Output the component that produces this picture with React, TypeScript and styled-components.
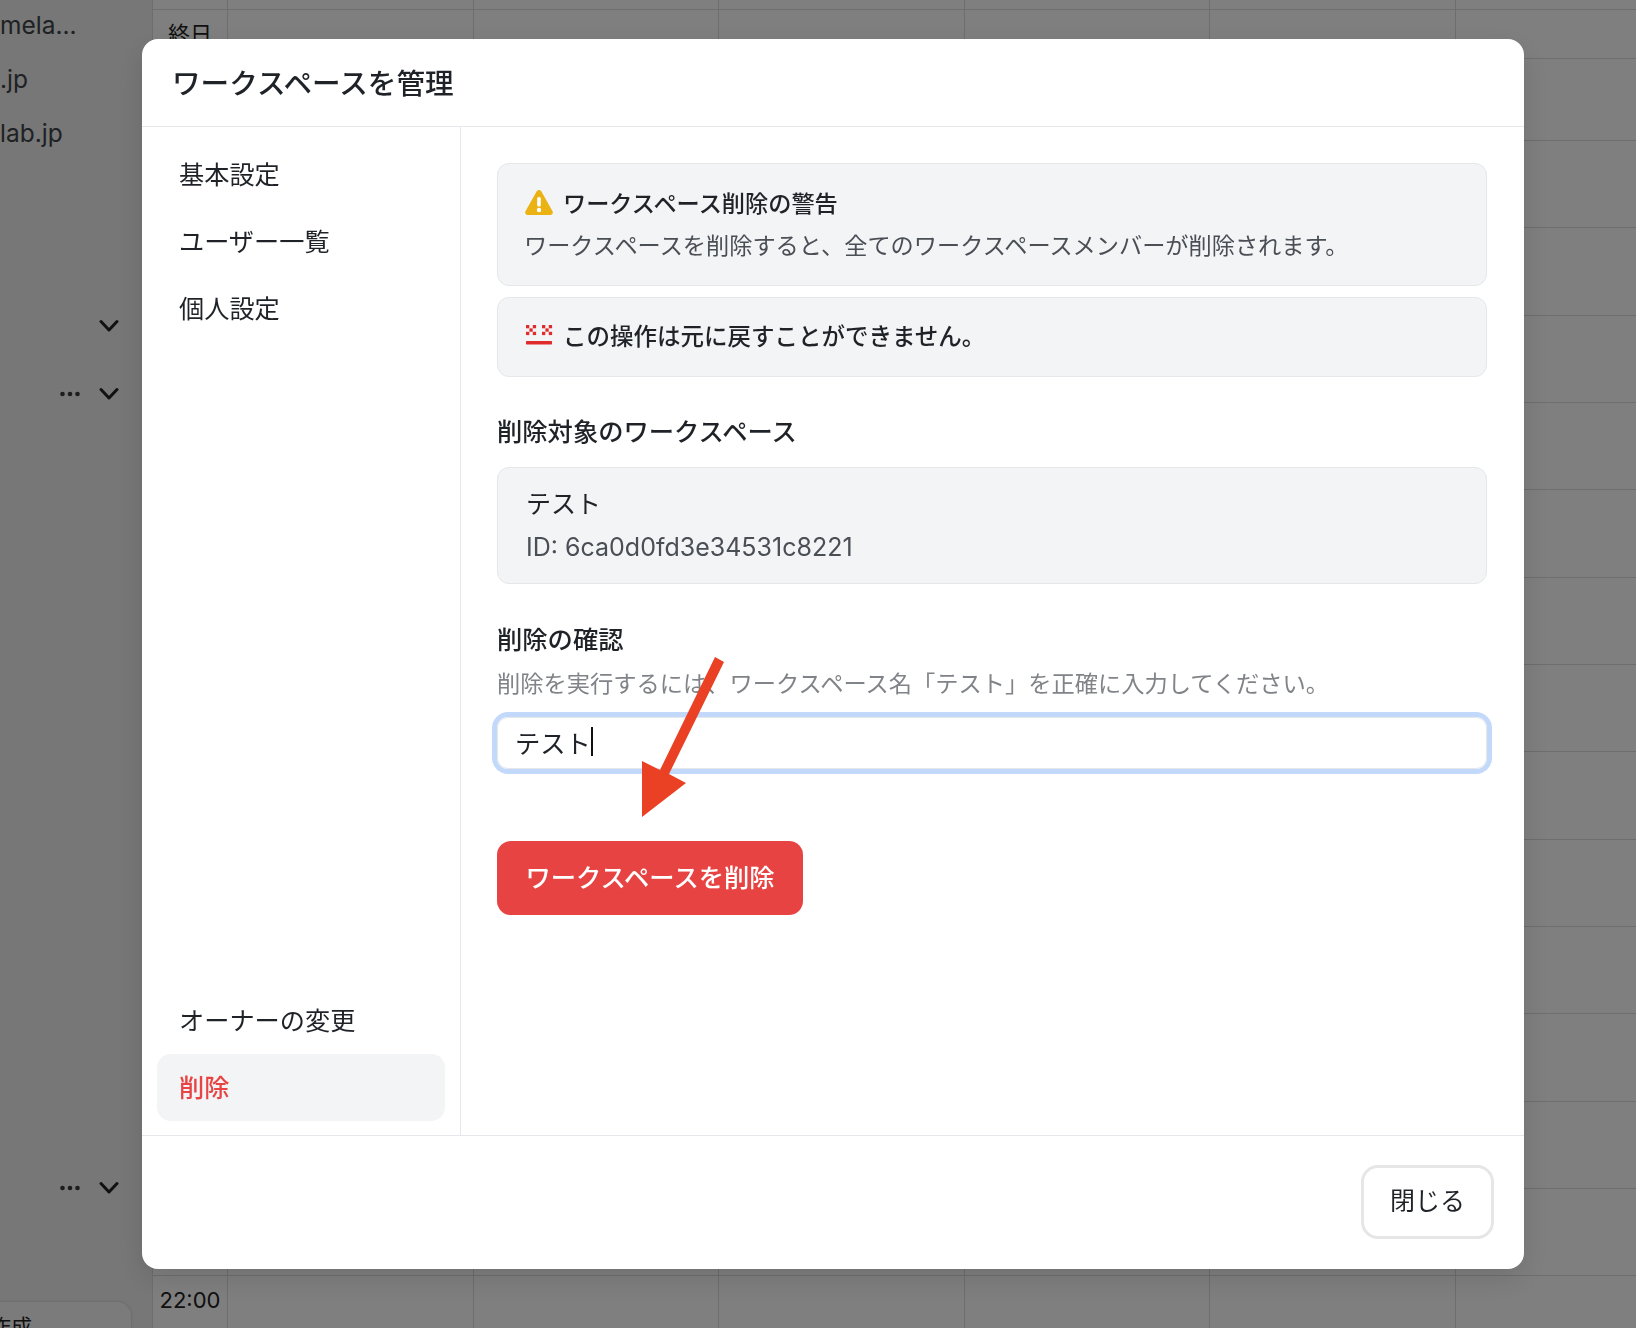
import styled, { createGlobalStyle } from "styled-components"

const GlobalStyle = createGlobalStyle`
  html, body {
    margin: 0;
    padding: 0;
    height: 100%;
    overflow: hidden;
    background: #fff;
  }
  body {
    font-family: Inter, "Noto Sans CJK JP", sans-serif;
    color: #1f2328;
  }
  * { box-sizing: border-box; }
`

const Page = styled.div`
  display: flex;
  width: 1636px;
  height: 1328px;
  overflow: hidden;
`

// underlying page, only seen through the overlay
const SidePanel = styled.aside`
  width: 152px;
  height: 100%;
  flex: none;
  display: flex;
  flex-direction: column;
  background: #eeeeee;
  overflow: hidden;
`

const SideText = styled.div`
  height: 54px;
  line-height: 54px;
  font-size: 24.5px;
  color: #3f4448;
  white-space: nowrap;
`

const SideTexts = styled.div`
  margin-top: -2px;
`

const SideControls = styled.div<{ $top: number }>`
  display: flex;
  justify-content: flex-end;
  align-items: center;
  gap: 19px;
  height: 24px;
  padding-right: 33px;
  margin-top: ${(p) => p.$top}px;
  color: #222;
`

const CreateCard = styled.div`
  margin-top: auto;
  width: 131px;
  height: 26px;
  flex: none;
  background: #f6f6f6;
  border-radius: 0 14px 0 0;
  box-shadow: 0 0 3px rgba(0, 0, 0, 0.18);
  font-size: 21px;
  line-height: 50px;
  text-indent: -10px;
  color: #222;
  white-space: nowrap;
  overflow: hidden;
`

const Calendar = styled.main`
  flex: 1;
  display: flex;
  flex-direction: column;
  background: #fff;
  overflow: hidden;
`

const CalRow = styled.div<{ $h: number }>`
  flex: none;
  height: ${(p) => p.$h}px;
  display: grid;
  grid-template-columns: 75px repeat(6, 245.6px);
  border-bottom: 1px solid #dcdcdc;
`

const TimeCell = styled.div`
  border-left: 1px solid #dcdcdc;
  font-size: 22px;
  text-align: center;
  color: #222;
  padding-top: 7px;
  line-height: 34px;
`

const DayCell = styled.div`
  border-left: 1px solid #dcdcdc;
`

// modal
const Overlay = styled.div`
  position: fixed;
  inset: 0;
  background: rgba(0, 0, 0, 0.5);
  padding: 39px 112px 59px 142px;
`

const Modal = styled.div`
  position: relative;
  height: 1230px;
  display: flex;
  flex-direction: column;
  background: #fff;
  border-radius: 16px;
  box-shadow: 0 10px 30px rgba(0, 0, 0, 0.12);
`

const Header = styled.header`
  height: 88px;
  flex: none;
  display: flex;
  align-items: center;
  padding: 0 0 2px 30px;
  border-bottom: 1px solid #e5e7eb;
`

const Title = styled.h2`
  margin: 0;
  font-size: 28.6px;
  font-weight: 500;
  color: #1f2328;
`

const Body = styled.div`
  flex: 1;
  display: flex;
  min-height: 0;
`

const Menu = styled.nav`
  width: 319px;
  flex: none;
  display: flex;
  flex-direction: column;
  padding: 14px 15px;
  border-right: 1px solid #e5e7eb;
`

const MenuBottom = styled.div`
  margin-top: auto;
`

const MenuItem = styled.div<{ $active?: boolean }>`
  height: 67px;
  display: flex;
  align-items: center;
  padding: 0 0 4px 22px;
  font-size: 25.2px;
  border-radius: 14px;
  color: ${(p) => (p.$active ? "#e94444" : "#1f2328")};
  background: ${(p) => (p.$active ? "#f3f4f6" : "transparent")};
  font-weight: ${(p) => (p.$active ? 500 : 400)};
`

const Content = styled.section`
  flex: 1;
  display: flex;
  flex-direction: column;
  padding: 36px 37px 0 36px;
`

const Notice = styled.div<{ $h: number }>`
  height: ${(p) => p.$h}px;
  flex: none;
  display: flex;
  flex-direction: column;
  justify-content: center;
  padding: 0 26px 4px 27px;
  background: #f3f4f6;
  border: 1px solid #e5e7eb;
  border-radius: 12px;
  & + & {
    margin-top: 11px;
  }
`

const NoticeHead = styled.div<{ $size: number }>`
  display: flex;
  align-items: center;
  gap: 10px;
  font-size: ${(p) => p.$size}px;
  font-weight: 500;
  color: #1f2328;
`

const NoticeText = styled.div`
  margin: 8px 0 0 -1px;
  font-size: 23.2px;
  color: #4a4e55;
`

const SectionTitle = styled.h3<{ $top: number }>`
  margin: ${(p) => p.$top}px 0 0;
  font-size: 25.3px;
  line-height: 36px;
  font-weight: 500;
  color: #1f2328;
`

const TargetBox = styled.div`
  height: 117px;
  flex: none;
  margin-top: 17px;
  display: flex;
  flex-direction: column;
  justify-content: center;
  padding: 1px 28px 0;
  background: #f3f4f6;
  border: 1px solid #e5e7eb;
  border-radius: 12px;
  font-size: 25px;
  line-height: 43px;
  color: #1f2328;
`

const TargetId = styled.div`
  color: #4a4e55;
`

const Hint = styled.div`
  margin-top: 9px;
  font-size: 23.25px;
  line-height: 34px;
  color: #808387;
`

const InputBox = styled.div`
  height: 52px;
  flex: none;
  margin-top: 16px;
  display: flex;
  align-items: center;
  padding: 0 0 3px 17px;
  border: 1px solid #e5e7eb;
  border-radius: 11px;
  box-shadow: 0 0 0 5px #c3d9fb;
  font-size: 25.3px;
  color: #1f2328;
`

const CaretLine = styled.span`
  display: inline-block;
  width: 2px;
  height: 29px;
  background: #111;
`

const DangerButton = styled.button`
  align-self: flex-start;
  width: 306px;
  height: 74px;
  margin-top: 72px;
  padding: 0 0 5px;
  border: none;
  border-radius: 14px;
  background: #e84343;
  color: #fff;
  font-family: inherit;
  font-size: 25.3px;
  font-weight: 500;
`

const Footer = styled.footer`
  height: 134px;
  flex: none;
  display: flex;
  justify-content: flex-end;
  align-items: flex-start;
  padding: 29px 30px 0 0;
  border-top: 1px solid #e5e7eb;
`

const CloseButton = styled.button`
  width: 133px;
  height: 74px;
  padding: 0 0 6px;
  background: #fff;
  border: 3px solid #e6e6e6;
  border-radius: 17px;
  font-family: inherit;
  font-size: 25px;
  color: #1f2328;
`

const Arrow = styled.svg`
  position: absolute;
  left: 0;
  top: 0;
  width: 1382px;
  height: 1230px;
  pointer-events: none;
`

const Chevron = () => (
  <svg width="20" height="14" viewBox="0 0 20 14" fill="none" stroke="currentColor" strokeWidth="3" strokeLinecap="round" strokeLinejoin="round">
    <path d="M2 2.5 L10 11 L18 2.5" />
  </svg>
)

const Dots = () => (
  <svg width="20" height="6" viewBox="0 0 20 6" fill="#3a3a3a">
    <circle cx="2.5" cy="3" r="2.3" />
    <circle cx="10" cy="3" r="2.3" />
    <circle cx="17.5" cy="3" r="2.3" />
  </svg>
)

const WarnIcon = () => (
  <svg width="28" height="26" viewBox="0 0 28 26">
    <path d="M14 1 C15 1 15.8 1.6 16.4 2.6 L27.4 22 C28.4 23.9 27.4 26 25.2 26 L2.8 26 C0.6 26 -0.4 23.9 0.6 22 L11.6 2.6 C12.2 1.6 13 1 14 1 Z" fill="#eab313" />
    <rect x="12.2" y="8" width="3.6" height="9.5" rx="1.6" fill="#fff" />
    <circle cx="14" cy="21" r="2.2" fill="#fff" />
  </svg>
)

const crossOffsets = [1, 17]
const crossCells = [
  [0, 0],
  [6.8, 0],
  [3.4, 3.4],
  [0, 6.8],
  [6.8, 6.8],
]

// blocky red glyph from the reference: two pixel crosses over a bar
const NoEntryIcon = () => (
  <svg width="28" height="22" viewBox="0 0 28 22" fill="#e02b2b">
    {crossOffsets.map((o) =>
      crossCells.map(([x, y]) => <rect key={`${o}-${x}-${y}`} x={o + x} y={1 + y} width="3.3" height="3.3" />)
    )}
    <rect x="1" y="17" width="26" height="3.4" rx="0.6" />
  </svg>
)

const dayCols = [0, 1, 2, 3, 4, 5]
const rowHeights = [10, 49, 82, ...Array.from({ length: 14 }, () => 87.35)]

export default function App() {
  return (
    <>
      <GlobalStyle />
      <Page>
        <SidePanel>
          <SideTexts>
            <SideText>mela...</SideText>
            <SideText>.jp</SideText>
            <SideText>lab.jp</SideText>
          </SideTexts>
          <SideControls $top={154}>
            <Chevron />
          </SideControls>
          <SideControls $top={44}>
            <Dots />
            <Chevron />
          </SideControls>
          <SideControls $top={770}>
            <Dots />
            <Chevron />
          </SideControls>
          <CreateCard>作成</CreateCard>
        </SidePanel>
        <Calendar>
          {rowHeights.map((h, i) => (
            <CalRow key={i} $h={h}>
              <TimeCell>{i === 1 ? "終日" : i === 16 ? "22:00" : ""}</TimeCell>
              {dayCols.map((c) => (
                <DayCell key={c} />
              ))}
            </CalRow>
          ))}
        </Calendar>
      </Page>
      <Overlay>
        <Modal>
          <Header>
            <Title>ワークスペースを管理</Title>
          </Header>
          <Body>
            <Menu>
              <MenuItem>基本設定</MenuItem>
              <MenuItem>ユーザー一覧</MenuItem>
              <MenuItem>個人設定</MenuItem>
              <MenuBottom>
                <MenuItem>オーナーの変更</MenuItem>
                <MenuItem $active>削除</MenuItem>
              </MenuBottom>
            </Menu>
            <Content>
              <Notice $h={123}>
                <NoticeHead $size={23.2}>
                  <WarnIcon />
                  ワークスペース削除の警告
                </NoticeHead>
                <NoticeText>ワークスペースを削除すると、全てのワークスペースメンバーが削除されます。</NoticeText>
              </Notice>
              <Notice $h={80}>
                <NoticeHead $size={23.5}>
                  <NoEntryIcon />
                  この操作は元に戻すことができません。
                </NoticeHead>
              </Notice>
              <SectionTitle $top={37}>削除対象のワークスペース</SectionTitle>
              <TargetBox>
                <div>テスト</div>
                <TargetId>ID: 6ca0d0fd3e34531c8221</TargetId>
              </TargetBox>
              <SectionTitle $top={38}>削除の確認</SectionTitle>
              <Hint>削除を実行するには、ワークスペース名「テスト」を正確に入力してください。</Hint>
              <InputBox>
                テスト
                <CaretLine />
              </InputBox>
              <DangerButton>ワークスペースを削除</DangerButton>
            </Content>
          </Body>
          <Footer>
            <CloseButton>閉じる</CloseButton>
          </Footer>
          <Arrow viewBox="0 0 1382 1230">
            <path d="M573 618 L582 623 L527 735 L544 744 L500 778 L500 722 L518 731 Z" fill="#ea4125" />
          </Arrow>
        </Modal>
      </Overlay>
    </>
  )
}
